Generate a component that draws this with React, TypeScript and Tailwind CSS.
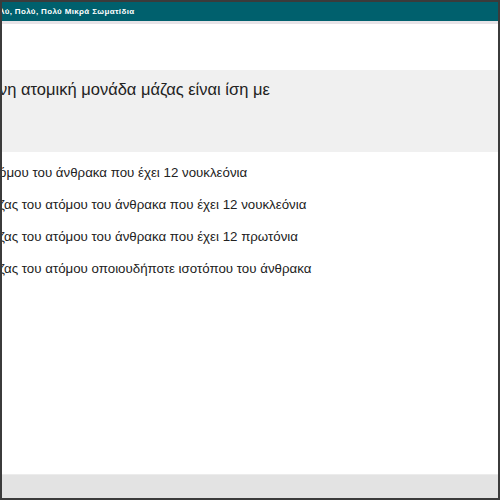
const options = [
  'όμου του άνθρακα που έχει 12 νουκλεόνια',
  'ζας του ατόμου του άνθρακα που έχει 12 νουκλεόνια',
  'ζας του ατόμου του άνθρακα που έχει 12 πρωτόνια',
  'ζας του ατόμου οποιουδήποτε ισοτόπου του άνθρακα',
]

export default function App() {
  return (
    <div className="w-[500px] h-[500px] overflow-hidden border-2 border-[#3b3b3b] bg-white flex flex-col font-['Liberation_Sans',Arial,sans-serif] text-[#222]">
      {/* header */}
      <div className="h-[19px] flex-shrink-0 bg-[#00606d] flex items-center overflow-hidden">
        <span className="-ml-[2px] whitespace-nowrap text-[8px] font-bold text-white tracking-[0.35px]">
          λύ, Πολύ, Πολύ Μικρά Σωματίδια
        </span>
      </div>
      <div className="h-[3px] flex-shrink-0 bg-[#e7e3e7]" />

      {/* question */}
      <div className="mt-[46px] h-[82px] flex-shrink-0 bg-[#f0f0f0] pt-[8px] overflow-hidden">
        <p className="-ml-[3px] whitespace-nowrap text-[16.5px] leading-[22px]">
          νη ατομική μονάδα μάζας είναι ίση με
        </p>
      </div>

      {/* answers */}
      <ul className="mt-[5px] flex flex-col overflow-hidden">
        {options.map((o) => (
          <li key={o} className="h-[32px] flex items-center">
            <span className="-ml-[3px] whitespace-nowrap text-[13.3px]">{o}</span>
          </li>
        ))}
      </ul>

      <div className="flex-1" />
      {/* footer */}
      <div className="h-[24px] flex-shrink-0 bg-[#e3e3e3] border-t border-[#ececec]" />
    </div>
  )
}
